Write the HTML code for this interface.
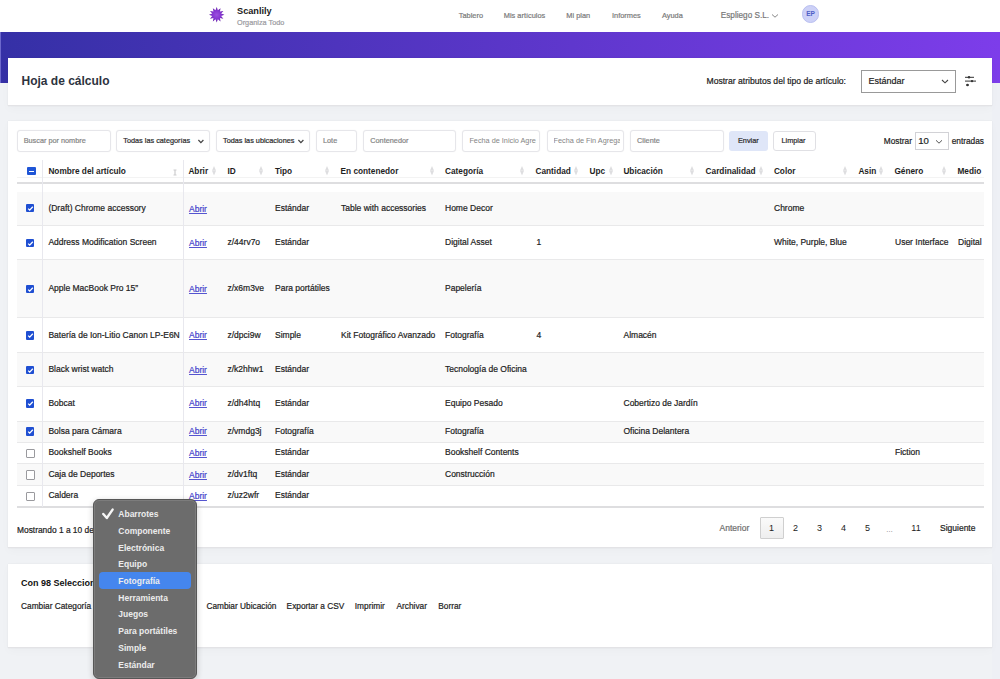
<!DOCTYPE html>
<html><head><meta charset="utf-8"><style>
html,body{margin:0;padding:0;}
body{width:1000px;height:679px;overflow:hidden;position:relative;background:#f0f2f5;font-family:"Liberation Sans", sans-serif;}
</style></head><body>
<div style="position:absolute;left:0px;top:0px;width:1000px;height:32px;background:#fff"></div>
<div style="position:absolute;left:0px;top:32px;width:1000px;height:50.5px;background:linear-gradient(90deg,#3530a6 0%,#5a36c8 50%,#7d3dea 100%)"></div>
<div style="position:absolute;left:0px;top:32px;width:1px;height:50.5px;background:#6d68cc"></div>
<div style="position:absolute;left:992px;top:82.5px;width:8px;height:600px;background:#eef0f5"></div>
<svg style="position:absolute;left:0;top:0" width="1000" height="40"><defs><radialGradient id="sg" cx="50%" cy="50%" r="50%"><stop offset="0%" stop-color="#9c4fe0"/><stop offset="60%" stop-color="#8334d0"/><stop offset="100%" stop-color="#5f1a9e"/></radialGradient></defs><polygon points="216.70,7.10 217.89,10.36 220.55,8.13 219.95,11.55 223.37,10.95 221.14,13.61 224.40,14.80 221.14,15.99 223.37,18.65 219.95,18.05 220.55,21.47 217.89,19.24 216.70,22.50 215.51,19.24 212.85,21.47 213.45,18.05 210.03,18.65 212.26,15.99 209.00,14.80 212.26,13.61 210.03,10.95 213.45,11.55 212.85,8.13 215.51,10.36" fill="url(#sg)"/></svg>
<div style="position:absolute;left:237px;top:0.85px;line-height:20px;font-size:9.2px;font-weight:700;color:#1b1b1b;white-space:nowrap;">Scanlily</div>
<div style="position:absolute;left:237px;top:12.88px;line-height:20px;font-size:7.3px;font-weight:400;color:#9a9aa0;white-space:nowrap;-webkit-text-stroke:0.2px #9a9aa0;">Organiza Todo</div>
<div style="position:absolute;left:458.8px;top:5.88px;line-height:20px;font-size:7.4px;font-weight:400;color:#7a7a7a;white-space:nowrap;-webkit-text-stroke:0.2px #7a7a7a;">Tablero</div>
<div style="position:absolute;left:503.8px;top:5.88px;line-height:20px;font-size:7.4px;font-weight:400;color:#7a7a7a;white-space:nowrap;-webkit-text-stroke:0.2px #7a7a7a;">Mis artículos</div>
<div style="position:absolute;left:566.3px;top:5.88px;line-height:20px;font-size:7.4px;font-weight:400;color:#7a7a7a;white-space:nowrap;-webkit-text-stroke:0.2px #7a7a7a;">Mi plan</div>
<div style="position:absolute;left:612px;top:5.88px;line-height:20px;font-size:7.4px;font-weight:400;color:#7a7a7a;white-space:nowrap;-webkit-text-stroke:0.2px #7a7a7a;">Informes</div>
<div style="position:absolute;left:662px;top:5.88px;line-height:20px;font-size:7.4px;font-weight:400;color:#7a7a7a;white-space:nowrap;-webkit-text-stroke:0.2px #7a7a7a;">Ayuda</div>
<div style="position:absolute;left:720.8px;top:5.86px;line-height:20px;font-size:8.2px;font-weight:400;color:#777;white-space:nowrap;-webkit-text-stroke:0.2px #777;">Espliego S.L.</div>
<svg style="position:absolute;left:771px;top:13px" width="8" height="6"><path d="M1 1.5 L4 4.2 L7 1.5" stroke="#888" stroke-width="1" fill="none"/></svg>
<div style="position:absolute;left:802px;top:5.4px;width:15.4px;height:15.4px;border-radius:50%;background:#cdd1f7;border:1px solid #b9bff0"></div>
<div style="position:absolute;left:806.2px;top:4.29px;line-height:20px;font-size:6.6px;font-weight:700;color:#4f5fc6;white-space:nowrap;">EP</div>
<div style="position:absolute;left:8px;top:57.5px;width:984px;height:47px;background:#fff;border-bottom:1px solid #e3e3e6;box-shadow:0 0 1px rgba(0,0,0,0.1),0 3px 9px rgba(0,0,0,0.025)"></div>
<div style="position:absolute;left:21.5px;top:71.40px;line-height:20px;font-size:12px;font-weight:700;color:#2d3340;white-space:nowrap;">Hoja de cálculo</div>
<div style="position:absolute;left:706.5px;top:70.86px;line-height:20px;font-size:8.6px;font-weight:400;color:#222;white-space:nowrap;-webkit-text-stroke:0.2px #222;">Mostrar atributos del tipo de artículo:</div>
<div style="position:absolute;left:861px;top:70px;width:93px;height:20.5px;background:#fff;border:1px solid #999"></div>
<div style="position:absolute;left:868.5px;top:70.65px;line-height:20px;font-size:9px;font-weight:400;color:#222;white-space:nowrap;-webkit-text-stroke:0.2px #222;">Estándar</div>
<svg style="position:absolute;left:941px;top:78.5px" width="8" height="5"><path d="M1 1 L4 3.8 L7 1" stroke="#444" stroke-width="1.1" fill="none"/></svg>
<svg style="position:absolute;left:962px;top:73px" width="16" height="16"><line x1="3" y1="4.3" x2="12" y2="4.3" stroke="#333" stroke-width="1"/><circle cx="7" cy="4.3" r="1.2" fill="#333"/><line x1="3" y1="8.1" x2="14" y2="8.1" stroke="#333" stroke-width="1"/><circle cx="10" cy="8.1" r="1.2" fill="#333"/><line x1="4" y1="12" x2="7" y2="12" stroke="#333" stroke-width="1"/><circle cx="5.5" cy="12" r="1.2" fill="#333"/></svg>
<div style="position:absolute;left:8px;top:121px;width:984px;height:425.8px;background:#fff;border-bottom:1px solid #e3e3e6;box-shadow:0 0 1px rgba(0,0,0,0.1),0 3px 9px rgba(0,0,0,0.025)"></div>
<div style="position:absolute;left:16.7px;top:130px;width:92.3px;height:19.5px;background:#fff;border:1px solid #e6e6ea;border-radius:3px;box-shadow:0 0 1.5px rgba(0,0,0,0.06)"></div>
<div style="position:absolute;left:23.7px;top:130.88px;line-height:20px;font-size:7.3px;font-weight:400;color:#858585;white-space:nowrap;-webkit-text-stroke:0.2px #858585;">Buscar por nombre</div>
<div style="position:absolute;left:116.3px;top:130px;width:92.10000000000001px;height:19.5px;background:#fff;border:1px solid #e6e6ea;border-radius:3px;box-shadow:0 0 1.5px rgba(0,0,0,0.06)"></div>
<div style="position:absolute;left:123.3px;top:130.88px;line-height:20px;font-size:7.3px;font-weight:400;color:#2a2a2a;white-space:nowrap;-webkit-text-stroke:0.2px #2a2a2a;">Todas las categorías</div>
<svg style="position:absolute;left:197.4px;top:139px" width="8" height="6"><path d="M1.4 1 L3.9 3.6 L6.4 1" stroke="#444" stroke-width="1.2" fill="none"/></svg>
<div style="position:absolute;left:216px;top:130px;width:91.60000000000002px;height:19.5px;background:#fff;border:1px solid #e6e6ea;border-radius:3px;box-shadow:0 0 1.5px rgba(0,0,0,0.06)"></div>
<div style="position:absolute;left:223px;top:130.88px;line-height:20px;font-size:7.3px;font-weight:400;color:#2a2a2a;white-space:nowrap;-webkit-text-stroke:0.2px #2a2a2a;">Todas las ubicaciones</div>
<svg style="position:absolute;left:296.6px;top:139px" width="8" height="6"><path d="M1.4 1 L3.9 3.6 L6.4 1" stroke="#444" stroke-width="1.2" fill="none"/></svg>
<div style="position:absolute;left:316px;top:130px;width:38.80000000000001px;height:19.5px;background:#fff;border:1px solid #e6e6ea;border-radius:3px;box-shadow:0 0 1.5px rgba(0,0,0,0.06)"></div>
<div style="position:absolute;left:323px;top:130.88px;line-height:20px;font-size:7.3px;font-weight:400;color:#858585;white-space:nowrap;-webkit-text-stroke:0.2px #858585;">Lote</div>
<div style="position:absolute;left:363.3px;top:130px;width:91.09999999999997px;height:19.5px;background:#fff;border:1px solid #e6e6ea;border-radius:3px;box-shadow:0 0 1.5px rgba(0,0,0,0.06)"></div>
<div style="position:absolute;left:370.3px;top:130.88px;line-height:20px;font-size:7.3px;font-weight:400;color:#858585;white-space:nowrap;-webkit-text-stroke:0.2px #858585;">Contenedor</div>
<div style="position:absolute;left:462.4px;top:130px;width:76px;height:19.5px;border:1px solid #e6e6ea;border-radius:3px;box-shadow:0 0 1.5px rgba(0,0,0,0.06);background:#fff"><div style="position:absolute;left:6px;top:0;width:66.5px;height:19.5px;overflow:hidden"><div style="position:absolute;left:0;top:0;line-height:20px;font-size:7.3px;color:#858585;white-space:nowrap;font-family:&quot;Liberation Sans&quot;, sans-serif">Fecha de Inicio Agregado</div></div></div>
<div style="position:absolute;left:546.6px;top:130px;width:75.7px;height:19.5px;border:1px solid #e6e6ea;border-radius:3px;box-shadow:0 0 1.5px rgba(0,0,0,0.06);background:#fff"><div style="position:absolute;left:6px;top:0;width:66px;height:19.5px;overflow:hidden"><div style="position:absolute;left:0;top:0;line-height:20px;font-size:7.3px;color:#858585;white-space:nowrap;font-family:&quot;Liberation Sans&quot;, sans-serif">Fecha de Fin Agregado</div></div></div>
<div style="position:absolute;left:630.1px;top:130px;width:92.0px;height:19.5px;background:#fff;border:1px solid #e6e6ea;border-radius:3px;box-shadow:0 0 1.5px rgba(0,0,0,0.06)"></div>
<div style="position:absolute;left:637.1px;top:130.88px;line-height:20px;font-size:7.3px;font-weight:400;color:#858585;white-space:nowrap;-webkit-text-stroke:0.2px #858585;">Cliente</div>
<div style="position:absolute;left:729.3px;top:130.8px;width:38.6px;height:20.3px;background:#dfe6f8;border-radius:3px"></div>
<div style="position:absolute;left:738px;top:130.88px;line-height:20px;font-size:7.3px;font-weight:400;color:#2a2a2a;white-space:nowrap;-webkit-text-stroke:0.2px #2a2a2a;">Enviar</div>
<div style="position:absolute;left:773.4px;top:130.8px;width:40.3px;height:18.5px;background:#fff;border:1px solid #e0e0e4;border-radius:3px"></div>
<div style="position:absolute;left:781.5px;top:130.88px;line-height:20px;font-size:7.3px;font-weight:400;color:#2a2a2a;white-space:nowrap;-webkit-text-stroke:0.2px #2a2a2a;">Limpiar</div>
<div style="position:absolute;left:883.8px;top:130.86px;line-height:20px;font-size:8.3px;font-weight:400;color:#222;white-space:nowrap;-webkit-text-stroke:0.2px #222;">Mostrar</div>
<div style="position:absolute;left:915.3px;top:132.3px;width:31.5px;height:15.5px;background:#fff;border:1px solid #d2d2d6"></div>
<div style="position:absolute;left:918.2px;top:130.84px;line-height:20px;font-size:9.6px;font-weight:400;color:#222;white-space:nowrap;-webkit-text-stroke:0.2px #222;">10</div>
<svg style="position:absolute;left:935px;top:138.5px" width="8" height="6"><path d="M1 1.3 L4 4.2 L7 1.3" stroke="#555" stroke-width="1" fill="none"/></svg>
<div style="position:absolute;left:951.7px;top:130.86px;line-height:20px;font-size:8.3px;font-weight:400;color:#222;white-space:nowrap;-webkit-text-stroke:0.2px #222;">entradas</div>
<div style="position:absolute;left:16.5px;top:155px;width:967px;height:360px;overflow:hidden">
<div style="position:absolute;left:0.0px;top:27px;width:967px;height:2px;background:#dedee0"></div>
<div style="position:absolute;left:0.0px;top:22px;width:967px;height:1px;background:#f3f3f3"></div>
<div style="position:absolute;left:31.9px;top:6.96px;line-height:20px;font-size:8.25px;font-weight:700;color:#1e1e1e;white-space:nowrap;">Nombre del artículo</div>
<svg style="position:absolute;left:156.0px;top:13.5px" width="4" height="7"><path d="M0.5 0.5 H3.5 V1.5 H2.6 V5.5 H3.5 V6.5 H0.5 V5.5 H1.4 V1.5 H0.5 Z" fill="#cdcdcf"/></svg>
<div style="position:absolute;left:171.9px;top:6.96px;line-height:20px;font-size:8.25px;font-weight:700;color:#1e1e1e;white-space:nowrap;">Abrir</div>
<svg style="position:absolute;left:195.7px;top:10.800000000000011px" width="4" height="10"><path d="M2 0 L4 4.6 L0 4.6 Z M2 9.4 L4 4.8 L0 4.8 Z" fill="#dedee0"/></svg>
<div style="position:absolute;left:211.0px;top:6.96px;line-height:20px;font-size:8.25px;font-weight:700;color:#1e1e1e;white-space:nowrap;">ID</div>
<svg style="position:absolute;left:242.89999999999998px;top:10.800000000000011px" width="4" height="10"><path d="M2 0 L4 4.6 L0 4.6 Z M2 9.4 L4 4.8 L0 4.8 Z" fill="#dedee0"/></svg>
<div style="position:absolute;left:258.4px;top:6.96px;line-height:20px;font-size:8.25px;font-weight:700;color:#1e1e1e;white-space:nowrap;">Tipo</div>
<svg style="position:absolute;left:308.0px;top:10.800000000000011px" width="4" height="10"><path d="M2 0 L4 4.6 L0 4.6 Z M2 9.4 L4 4.8 L0 4.8 Z" fill="#dedee0"/></svg>
<div style="position:absolute;left:324.1px;top:6.96px;line-height:20px;font-size:8.25px;font-weight:700;color:#1e1e1e;white-space:nowrap;">En contenedor</div>
<svg style="position:absolute;left:413.0px;top:10.800000000000011px" width="4" height="10"><path d="M2 0 L4 4.6 L0 4.6 Z M2 9.4 L4 4.8 L0 4.8 Z" fill="#dedee0"/></svg>
<div style="position:absolute;left:428.5px;top:6.96px;line-height:20px;font-size:8.25px;font-weight:700;color:#1e1e1e;white-space:nowrap;">Categoría</div>
<svg style="position:absolute;left:503.5px;top:10.800000000000011px" width="4" height="10"><path d="M2 0 L4 4.6 L0 4.6 Z M2 9.4 L4 4.8 L0 4.8 Z" fill="#dedee0"/></svg>
<div style="position:absolute;left:519.0px;top:6.96px;line-height:20px;font-size:8.25px;font-weight:700;color:#1e1e1e;white-space:nowrap;">Cantidad</div>
<svg style="position:absolute;left:557.5px;top:10.800000000000011px" width="4" height="10"><path d="M2 0 L4 4.6 L0 4.6 Z M2 9.4 L4 4.8 L0 4.8 Z" fill="#dedee0"/></svg>
<div style="position:absolute;left:573.0px;top:6.96px;line-height:20px;font-size:8.25px;font-weight:700;color:#1e1e1e;white-space:nowrap;">Upc</div>
<svg style="position:absolute;left:592.0px;top:10.800000000000011px" width="4" height="10"><path d="M2 0 L4 4.6 L0 4.6 Z M2 9.4 L4 4.8 L0 4.8 Z" fill="#dedee0"/></svg>
<div style="position:absolute;left:606.9px;top:6.96px;line-height:20px;font-size:8.25px;font-weight:700;color:#1e1e1e;white-space:nowrap;">Ubicación</div>
<svg style="position:absolute;left:673.5px;top:10.800000000000011px" width="4" height="10"><path d="M2 0 L4 4.6 L0 4.6 Z M2 9.4 L4 4.8 L0 4.8 Z" fill="#dedee0"/></svg>
<div style="position:absolute;left:689.1px;top:6.96px;line-height:20px;font-size:8.25px;font-weight:700;color:#1e1e1e;white-space:nowrap;">Cardinalidad</div>
<svg style="position:absolute;left:742.0px;top:10.800000000000011px" width="4" height="10"><path d="M2 0 L4 4.6 L0 4.6 Z M2 9.4 L4 4.8 L0 4.8 Z" fill="#dedee0"/></svg>
<div style="position:absolute;left:757.4px;top:6.96px;line-height:20px;font-size:8.25px;font-weight:700;color:#1e1e1e;white-space:nowrap;">Color</div>
<svg style="position:absolute;left:826.0px;top:10.800000000000011px" width="4" height="10"><path d="M2 0 L4 4.6 L0 4.6 Z M2 9.4 L4 4.8 L0 4.8 Z" fill="#dedee0"/></svg>
<div style="position:absolute;left:841.9px;top:6.96px;line-height:20px;font-size:8.25px;font-weight:700;color:#1e1e1e;white-space:nowrap;">Asin</div>
<svg style="position:absolute;left:862.2px;top:10.800000000000011px" width="4" height="10"><path d="M2 0 L4 4.6 L0 4.6 Z M2 9.4 L4 4.8 L0 4.8 Z" fill="#dedee0"/></svg>
<div style="position:absolute;left:877.9px;top:6.96px;line-height:20px;font-size:8.25px;font-weight:700;color:#1e1e1e;white-space:nowrap;">Género</div>
<svg style="position:absolute;left:925.8px;top:10.800000000000011px" width="4" height="10"><path d="M2 0 L4 4.6 L0 4.6 Z M2 9.4 L4 4.8 L0 4.8 Z" fill="#dedee0"/></svg>
<div style="position:absolute;left:941.0px;top:6.96px;line-height:20px;font-size:8.25px;font-weight:700;color:#1e1e1e;white-space:nowrap;">Medio</div>
<div style="position:absolute;left:10.7px;top:12px;width:8.4px;height:8.4px;background:#1f55d6;border-radius:1px"></div>
<div style="position:absolute;left:12.2px;top:15.699999999999989px;width:5.4px;height:1.2px;background:#fff"></div>
<div style="position:absolute;left:0.0px;top:37px;width:967px;height:33px;background:#f9f9f9"></div>
<div style="position:absolute;left:0.0px;top:70px;width:967px;height:1px;background:#e9e9ea"></div>
<div style="position:absolute;left:9.100000000000001px;top:48.5px;width:8.5px;height:8.5px;background:#1f4fd2;border-radius:1px"></div>
<svg style="position:absolute;left:9.100000000000001px;top:48.5px" width="9" height="9"><path d="M2.2 4.6 L3.7 6.1 L6.8 2.8" stroke="#fff" stroke-width="1.3" fill="none"/></svg>
<div style="position:absolute;left:31.9px;top:43.36px;line-height:20px;font-size:8.5px;font-weight:400;color:#222;white-space:nowrap;-webkit-text-stroke:0.2px #222;">(Draft) Chrome accessory</div>
<div style="position:absolute;left:258.5px;top:43.36px;line-height:20px;font-size:8.5px;font-weight:400;color:#222;white-space:nowrap;-webkit-text-stroke:0.2px #222;">Estándar</div>
<div style="position:absolute;left:324.5px;top:43.36px;line-height:20px;font-size:8.5px;font-weight:400;color:#222;white-space:nowrap;-webkit-text-stroke:0.2px #222;">Table with accessories</div>
<div style="position:absolute;left:428.5px;top:43.36px;line-height:20px;font-size:8.5px;font-weight:400;color:#222;white-space:nowrap;-webkit-text-stroke:0.2px #222;">Home Decor</div>
<div style="position:absolute;left:757.5px;top:43.36px;line-height:20px;font-size:8.5px;font-weight:400;color:#222;white-space:nowrap;-webkit-text-stroke:0.2px #222;">Chrome</div>
<div style="position:absolute;left:172.5px;top:43.76px;line-height:20px;font-size:8.5px;font-weight:400;color:#4343cc;white-space:nowrap;-webkit-text-stroke:0.2px #4343cc;text-decoration:underline;text-underline-offset:0.6px;text-decoration-color:#5555d0">Abrir</div>
<div style="position:absolute;left:0.0px;top:71px;width:967px;height:33px;background:#fff"></div>
<div style="position:absolute;left:0.0px;top:104px;width:967px;height:1px;background:#e9e9ea"></div>
<div style="position:absolute;left:9.100000000000001px;top:83.5px;width:8.5px;height:8.5px;background:#1f4fd2;border-radius:1px"></div>
<svg style="position:absolute;left:9.100000000000001px;top:83.5px" width="9" height="9"><path d="M2.2 4.6 L3.7 6.1 L6.8 2.8" stroke="#fff" stroke-width="1.3" fill="none"/></svg>
<div style="position:absolute;left:31.9px;top:77.36px;line-height:20px;font-size:8.5px;font-weight:400;color:#222;white-space:nowrap;-webkit-text-stroke:0.2px #222;">Address Modification Screen</div>
<div style="position:absolute;left:211.0px;top:77.36px;line-height:20px;font-size:8.5px;font-weight:400;color:#222;white-space:nowrap;-webkit-text-stroke:0.2px #222;">z/44rv7o</div>
<div style="position:absolute;left:258.5px;top:77.36px;line-height:20px;font-size:8.5px;font-weight:400;color:#222;white-space:nowrap;-webkit-text-stroke:0.2px #222;">Estándar</div>
<div style="position:absolute;left:428.5px;top:77.36px;line-height:20px;font-size:8.5px;font-weight:400;color:#222;white-space:nowrap;-webkit-text-stroke:0.2px #222;">Digital Asset</div>
<div style="position:absolute;left:520.0px;top:77.36px;line-height:20px;font-size:8.5px;font-weight:400;color:#222;white-space:nowrap;-webkit-text-stroke:0.2px #222;">1</div>
<div style="position:absolute;left:757.5px;top:77.36px;line-height:20px;font-size:8.5px;font-weight:400;color:#222;white-space:nowrap;-webkit-text-stroke:0.2px #222;">White, Purple, Blue</div>
<div style="position:absolute;left:878.5px;top:77.36px;line-height:20px;font-size:8.5px;font-weight:400;color:#222;white-space:nowrap;-webkit-text-stroke:0.2px #222;">User Interface</div>
<div style="position:absolute;left:941.5px;top:77.36px;line-height:20px;font-size:8.5px;font-weight:400;color:#222;white-space:nowrap;-webkit-text-stroke:0.2px #222;">Digital</div>
<div style="position:absolute;left:172.5px;top:77.76px;line-height:20px;font-size:8.5px;font-weight:400;color:#4343cc;white-space:nowrap;-webkit-text-stroke:0.2px #4343cc;text-decoration:underline;text-underline-offset:0.6px;text-decoration-color:#5555d0">Abrir</div>
<div style="position:absolute;left:0.0px;top:105px;width:967px;height:57px;background:#f9f9f9"></div>
<div style="position:absolute;left:0.0px;top:162px;width:967px;height:1px;background:#e9e9ea"></div>
<div style="position:absolute;left:9.100000000000001px;top:129.5px;width:8.5px;height:8.5px;background:#1f4fd2;border-radius:1px"></div>
<svg style="position:absolute;left:9.100000000000001px;top:129.5px" width="9" height="9"><path d="M2.2 4.6 L3.7 6.1 L6.8 2.8" stroke="#fff" stroke-width="1.3" fill="none"/></svg>
<div style="position:absolute;left:31.9px;top:123.36px;line-height:20px;font-size:8.5px;font-weight:400;color:#222;white-space:nowrap;-webkit-text-stroke:0.2px #222;">Apple MacBook Pro 15”</div>
<div style="position:absolute;left:211.0px;top:123.36px;line-height:20px;font-size:8.5px;font-weight:400;color:#222;white-space:nowrap;-webkit-text-stroke:0.2px #222;">z/x6m3ve</div>
<div style="position:absolute;left:258.5px;top:123.36px;line-height:20px;font-size:8.5px;font-weight:400;color:#222;white-space:nowrap;-webkit-text-stroke:0.2px #222;">Para portátiles</div>
<div style="position:absolute;left:428.5px;top:123.36px;line-height:20px;font-size:8.5px;font-weight:400;color:#222;white-space:nowrap;-webkit-text-stroke:0.2px #222;">Papelería</div>
<div style="position:absolute;left:172.5px;top:123.76px;line-height:20px;font-size:8.5px;font-weight:400;color:#4343cc;white-space:nowrap;-webkit-text-stroke:0.2px #4343cc;text-decoration:underline;text-underline-offset:0.6px;text-decoration-color:#5555d0">Abrir</div>
<div style="position:absolute;left:0.0px;top:163px;width:967px;height:34px;background:#fff"></div>
<div style="position:absolute;left:0.0px;top:197px;width:967px;height:1px;background:#e9e9ea"></div>
<div style="position:absolute;left:9.100000000000001px;top:176.0px;width:8.5px;height:8.5px;background:#1f4fd2;border-radius:1px"></div>
<svg style="position:absolute;left:9.100000000000001px;top:176.0px" width="9" height="9"><path d="M2.2 4.6 L3.7 6.1 L6.8 2.8" stroke="#fff" stroke-width="1.3" fill="none"/></svg>
<div style="position:absolute;left:31.9px;top:169.86px;line-height:20px;font-size:8.5px;font-weight:400;color:#222;white-space:nowrap;-webkit-text-stroke:0.2px #222;">Batería de Ion-Litio Canon LP-E6N</div>
<div style="position:absolute;left:211.0px;top:169.86px;line-height:20px;font-size:8.5px;font-weight:400;color:#222;white-space:nowrap;-webkit-text-stroke:0.2px #222;">z/dpci9w</div>
<div style="position:absolute;left:258.5px;top:169.86px;line-height:20px;font-size:8.5px;font-weight:400;color:#222;white-space:nowrap;-webkit-text-stroke:0.2px #222;">Simple</div>
<div style="position:absolute;left:324.5px;top:169.86px;line-height:20px;font-size:8.5px;font-weight:400;color:#222;white-space:nowrap;-webkit-text-stroke:0.2px #222;">Kit Fotográfico Avanzado</div>
<div style="position:absolute;left:428.5px;top:169.86px;line-height:20px;font-size:8.5px;font-weight:400;color:#222;white-space:nowrap;-webkit-text-stroke:0.2px #222;">Fotografía</div>
<div style="position:absolute;left:520.0px;top:169.86px;line-height:20px;font-size:8.5px;font-weight:400;color:#222;white-space:nowrap;-webkit-text-stroke:0.2px #222;">4</div>
<div style="position:absolute;left:607.0px;top:169.86px;line-height:20px;font-size:8.5px;font-weight:400;color:#222;white-space:nowrap;-webkit-text-stroke:0.2px #222;">Almacén</div>
<div style="position:absolute;left:172.5px;top:170.26px;line-height:20px;font-size:8.5px;font-weight:400;color:#4343cc;white-space:nowrap;-webkit-text-stroke:0.2px #4343cc;text-decoration:underline;text-underline-offset:0.6px;text-decoration-color:#5555d0">Abrir</div>
<div style="position:absolute;left:0.0px;top:198px;width:967px;height:33px;background:#f9f9f9"></div>
<div style="position:absolute;left:0.0px;top:231px;width:967px;height:1px;background:#e9e9ea"></div>
<div style="position:absolute;left:9.100000000000001px;top:210.5px;width:8.5px;height:8.5px;background:#1f4fd2;border-radius:1px"></div>
<svg style="position:absolute;left:9.100000000000001px;top:210.5px" width="9" height="9"><path d="M2.2 4.6 L3.7 6.1 L6.8 2.8" stroke="#fff" stroke-width="1.3" fill="none"/></svg>
<div style="position:absolute;left:31.9px;top:204.36px;line-height:20px;font-size:8.5px;font-weight:400;color:#222;white-space:nowrap;-webkit-text-stroke:0.2px #222;">Black wrist watch</div>
<div style="position:absolute;left:211.0px;top:204.36px;line-height:20px;font-size:8.5px;font-weight:400;color:#222;white-space:nowrap;-webkit-text-stroke:0.2px #222;">z/k2hhw1</div>
<div style="position:absolute;left:258.5px;top:204.36px;line-height:20px;font-size:8.5px;font-weight:400;color:#222;white-space:nowrap;-webkit-text-stroke:0.2px #222;">Estándar</div>
<div style="position:absolute;left:428.5px;top:204.36px;line-height:20px;font-size:8.5px;font-weight:400;color:#222;white-space:nowrap;-webkit-text-stroke:0.2px #222;">Tecnología de Oficina</div>
<div style="position:absolute;left:172.5px;top:204.76px;line-height:20px;font-size:8.5px;font-weight:400;color:#4343cc;white-space:nowrap;-webkit-text-stroke:0.2px #4343cc;text-decoration:underline;text-underline-offset:0.6px;text-decoration-color:#5555d0">Abrir</div>
<div style="position:absolute;left:0.0px;top:232px;width:967px;height:34px;background:#fff"></div>
<div style="position:absolute;left:0.0px;top:266px;width:967px;height:1px;background:#e9e9ea"></div>
<div style="position:absolute;left:9.100000000000001px;top:244.0px;width:8.5px;height:8.5px;background:#1f4fd2;border-radius:1px"></div>
<svg style="position:absolute;left:9.100000000000001px;top:244.0px" width="9" height="9"><path d="M2.2 4.6 L3.7 6.1 L6.8 2.8" stroke="#fff" stroke-width="1.3" fill="none"/></svg>
<div style="position:absolute;left:31.9px;top:237.86px;line-height:20px;font-size:8.5px;font-weight:400;color:#222;white-space:nowrap;-webkit-text-stroke:0.2px #222;">Bobcat</div>
<div style="position:absolute;left:211.0px;top:237.86px;line-height:20px;font-size:8.5px;font-weight:400;color:#222;white-space:nowrap;-webkit-text-stroke:0.2px #222;">z/dh4htq</div>
<div style="position:absolute;left:258.5px;top:237.86px;line-height:20px;font-size:8.5px;font-weight:400;color:#222;white-space:nowrap;-webkit-text-stroke:0.2px #222;">Estándar</div>
<div style="position:absolute;left:428.5px;top:237.86px;line-height:20px;font-size:8.5px;font-weight:400;color:#222;white-space:nowrap;-webkit-text-stroke:0.2px #222;">Equipo Pesado</div>
<div style="position:absolute;left:607.0px;top:237.86px;line-height:20px;font-size:8.5px;font-weight:400;color:#222;white-space:nowrap;-webkit-text-stroke:0.2px #222;">Cobertizo de Jardín</div>
<div style="position:absolute;left:172.5px;top:238.26px;line-height:20px;font-size:8.5px;font-weight:400;color:#4343cc;white-space:nowrap;-webkit-text-stroke:0.2px #4343cc;text-decoration:underline;text-underline-offset:0.6px;text-decoration-color:#5555d0">Abrir</div>
<div style="position:absolute;left:0.0px;top:267px;width:967px;height:20px;background:#f9f9f9"></div>
<div style="position:absolute;left:0.0px;top:287px;width:967px;height:1px;background:#e9e9ea"></div>
<div style="position:absolute;left:9.100000000000001px;top:272.0px;width:8.5px;height:8.5px;background:#1f4fd2;border-radius:1px"></div>
<svg style="position:absolute;left:9.100000000000001px;top:272.0px" width="9" height="9"><path d="M2.2 4.6 L3.7 6.1 L6.8 2.8" stroke="#fff" stroke-width="1.3" fill="none"/></svg>
<div style="position:absolute;left:31.9px;top:265.86px;line-height:20px;font-size:8.5px;font-weight:400;color:#222;white-space:nowrap;-webkit-text-stroke:0.2px #222;">Bolsa para Cámara</div>
<div style="position:absolute;left:211.0px;top:265.86px;line-height:20px;font-size:8.5px;font-weight:400;color:#222;white-space:nowrap;-webkit-text-stroke:0.2px #222;">z/vmdg3j</div>
<div style="position:absolute;left:258.5px;top:265.86px;line-height:20px;font-size:8.5px;font-weight:400;color:#222;white-space:nowrap;-webkit-text-stroke:0.2px #222;">Fotografía</div>
<div style="position:absolute;left:428.5px;top:265.86px;line-height:20px;font-size:8.5px;font-weight:400;color:#222;white-space:nowrap;-webkit-text-stroke:0.2px #222;">Fotografía</div>
<div style="position:absolute;left:607.0px;top:265.86px;line-height:20px;font-size:8.5px;font-weight:400;color:#222;white-space:nowrap;-webkit-text-stroke:0.2px #222;">Oficina Delantera</div>
<div style="position:absolute;left:172.5px;top:266.26px;line-height:20px;font-size:8.5px;font-weight:400;color:#4343cc;white-space:nowrap;-webkit-text-stroke:0.2px #4343cc;text-decoration:underline;text-underline-offset:0.6px;text-decoration-color:#5555d0">Abrir</div>
<div style="position:absolute;left:0.0px;top:288px;width:967px;height:20px;background:#fff"></div>
<div style="position:absolute;left:0.0px;top:308px;width:967px;height:1px;background:#e9e9ea"></div>
<div style="position:absolute;left:9.0px;top:293.90000000000003px;width:7.2px;height:7.2px;background:#fff;border:1px solid #9a9a9e;border-radius:1px"></div>
<div style="position:absolute;left:31.9px;top:287.26px;line-height:20px;font-size:8.5px;font-weight:400;color:#222;white-space:nowrap;-webkit-text-stroke:0.2px #222;">Bookshelf Books</div>
<div style="position:absolute;left:258.5px;top:287.26px;line-height:20px;font-size:8.5px;font-weight:400;color:#222;white-space:nowrap;-webkit-text-stroke:0.2px #222;">Estándar</div>
<div style="position:absolute;left:428.5px;top:287.26px;line-height:20px;font-size:8.5px;font-weight:400;color:#222;white-space:nowrap;-webkit-text-stroke:0.2px #222;">Bookshelf Contents</div>
<div style="position:absolute;left:878.5px;top:287.26px;line-height:20px;font-size:8.5px;font-weight:400;color:#222;white-space:nowrap;-webkit-text-stroke:0.2px #222;">Fiction</div>
<div style="position:absolute;left:172.5px;top:287.66px;line-height:20px;font-size:8.5px;font-weight:400;color:#4343cc;white-space:nowrap;-webkit-text-stroke:0.2px #4343cc;text-decoration:underline;text-underline-offset:0.6px;text-decoration-color:#5555d0">Abrir</div>
<div style="position:absolute;left:0.0px;top:309px;width:967px;height:21px;background:#f9f9f9"></div>
<div style="position:absolute;left:0.0px;top:330px;width:967px;height:1px;background:#e9e9ea"></div>
<div style="position:absolute;left:9.0px;top:315.40000000000003px;width:7.2px;height:7.2px;background:#fff;border:1px solid #9a9a9e;border-radius:1px"></div>
<div style="position:absolute;left:31.9px;top:309.36px;line-height:20px;font-size:8.5px;font-weight:400;color:#222;white-space:nowrap;-webkit-text-stroke:0.2px #222;">Caja de Deportes</div>
<div style="position:absolute;left:211.0px;top:309.36px;line-height:20px;font-size:8.5px;font-weight:400;color:#222;white-space:nowrap;-webkit-text-stroke:0.2px #222;">z/dv1ftq</div>
<div style="position:absolute;left:258.5px;top:309.36px;line-height:20px;font-size:8.5px;font-weight:400;color:#222;white-space:nowrap;-webkit-text-stroke:0.2px #222;">Estándar</div>
<div style="position:absolute;left:428.5px;top:309.36px;line-height:20px;font-size:8.5px;font-weight:400;color:#222;white-space:nowrap;-webkit-text-stroke:0.2px #222;">Construcción</div>
<div style="position:absolute;left:172.5px;top:309.76px;line-height:20px;font-size:8.5px;font-weight:400;color:#4343cc;white-space:nowrap;-webkit-text-stroke:0.2px #4343cc;text-decoration:underline;text-underline-offset:0.6px;text-decoration-color:#5555d0">Abrir</div>
<div style="position:absolute;left:0.0px;top:331px;width:967px;height:20px;background:#fff"></div>
<div style="position:absolute;left:0.0px;top:351px;width:967px;height:2px;background:#dedee0"></div>
<div style="position:absolute;left:9.0px;top:336.90000000000003px;width:7.2px;height:7.2px;background:#fff;border:1px solid #9a9a9e;border-radius:1px"></div>
<div style="position:absolute;left:31.9px;top:330.26px;line-height:20px;font-size:8.5px;font-weight:400;color:#222;white-space:nowrap;-webkit-text-stroke:0.2px #222;">Caldera</div>
<div style="position:absolute;left:211.0px;top:330.26px;line-height:20px;font-size:8.5px;font-weight:400;color:#222;white-space:nowrap;-webkit-text-stroke:0.2px #222;">z/uz2wfr</div>
<div style="position:absolute;left:258.5px;top:330.26px;line-height:20px;font-size:8.5px;font-weight:400;color:#222;white-space:nowrap;-webkit-text-stroke:0.2px #222;">Estándar</div>
<div style="position:absolute;left:172.5px;top:330.66px;line-height:20px;font-size:8.5px;font-weight:400;color:#4343cc;white-space:nowrap;-webkit-text-stroke:0.2px #4343cc;text-decoration:underline;text-underline-offset:0.6px;text-decoration-color:#5555d0">Abrir</div>
<div style="position:absolute;left:25.700000000000003px;top:4.5px;width:1px;height:347.5px;background:#e8e8ee"></div>
<div style="position:absolute;left:166.1px;top:4.5px;width:1px;height:347.5px;background:#e8e8ee"></div>
</div>
<div style="position:absolute;left:17px;top:519.86px;line-height:20px;font-size:8.4px;font-weight:400;color:#222;white-space:nowrap;-webkit-text-stroke:0.2px #222;">Mostrando 1 a 10 de 98 entradas</div>
<div style="position:absolute;left:719.5px;top:517.86px;line-height:20px;font-size:8.5px;font-weight:400;color:#6e6e6e;white-space:nowrap;-webkit-text-stroke:0.2px #6e6e6e;">Anterior</div>
<div style="position:absolute;left:760px;top:517px;width:21.5px;height:20px;background:linear-gradient(#fafafa,#eeeeee);border:1px solid #cfcfcf;border-radius:1px"></div>
<div style="position:absolute;left:756.4px;top:518.0px;width:30px;text-align:center;line-height:20px;font-size:9px;color:#222">1</div>
<div style="position:absolute;left:780.4px;top:518.0px;width:30px;text-align:center;line-height:20px;font-size:9px;color:#222">2</div>
<div style="position:absolute;left:804.4px;top:518.0px;width:30px;text-align:center;line-height:20px;font-size:9px;color:#222">3</div>
<div style="position:absolute;left:828.4px;top:518.0px;width:30px;text-align:center;line-height:20px;font-size:9px;color:#222">4</div>
<div style="position:absolute;left:852.4px;top:518.0px;width:30px;text-align:center;line-height:20px;font-size:9px;color:#222">5</div>
<div style="position:absolute;left:901px;top:518.0px;width:30px;text-align:center;line-height:20px;font-size:9px;color:#222">11</div>
<div style="position:absolute;left:874.6px;top:519.8px;width:30px;text-align:center;line-height:20px;font-size:7px;color:#666">…</div>
<div style="position:absolute;left:940px;top:517.86px;line-height:20px;font-size:8.5px;font-weight:400;color:#222;white-space:nowrap;-webkit-text-stroke:0.2px #222;">Siguiente</div>
<div style="position:absolute;left:8px;top:564px;width:984px;height:82.7px;background:#fff;border-bottom:1px solid #e3e3e6;box-shadow:0 0 1px rgba(0,0,0,0.1),0 3px 9px rgba(0,0,0,0.025)"></div>
<div style="position:absolute;left:21px;top:572.85px;line-height:20px;font-size:9px;font-weight:700;color:#111;white-space:nowrap;">Con 98 Seleccionados</div>
<div style="position:absolute;left:21.1px;top:596.06px;line-height:20px;font-size:8.3px;font-weight:400;color:#222;white-space:nowrap;-webkit-text-stroke:0.2px #222;">Cambiar Categoría</div>
<div style="position:absolute;left:110px;top:596.06px;line-height:20px;font-size:8.3px;font-weight:400;color:#222;white-space:nowrap;-webkit-text-stroke:0.2px #222;">Cambiar Tipo</div>
<div style="position:absolute;left:206.4px;top:596.06px;line-height:20px;font-size:8.3px;font-weight:400;color:#222;white-space:nowrap;-webkit-text-stroke:0.2px #222;">Cambiar Ubicación</div>
<div style="position:absolute;left:286.6px;top:596.06px;line-height:20px;font-size:8.3px;font-weight:400;color:#222;white-space:nowrap;-webkit-text-stroke:0.2px #222;">Exportar a CSV</div>
<div style="position:absolute;left:354.8px;top:596.06px;line-height:20px;font-size:8.3px;font-weight:400;color:#222;white-space:nowrap;-webkit-text-stroke:0.2px #222;">Imprimir</div>
<div style="position:absolute;left:396.5px;top:596.06px;line-height:20px;font-size:8.3px;font-weight:400;color:#222;white-space:nowrap;-webkit-text-stroke:0.2px #222;">Archivar</div>
<div style="position:absolute;left:438.3px;top:596.06px;line-height:20px;font-size:8.3px;font-weight:400;color:#222;white-space:nowrap;-webkit-text-stroke:0.2px #222;">Borrar</div>
<div style="position:absolute;left:92.6px;top:499px;width:102.3px;height:177.5px;background:#6c6c6c;border:1px solid #575757;border-radius:6px;box-shadow:inset 0 0 0 1px #7c7c7c,0 2px 6px rgba(0,0,0,.2)"></div>
<div style="position:absolute;left:98.5px;top:572.2px;width:92.2px;height:17.1px;background:#4586ee;border-radius:4px"></div>
<div style="position:absolute;left:118.3px;top:504.26px;line-height:20px;font-size:8.5px;font-weight:700;color:#ececec;white-space:nowrap;">Abarrotes</div>
<div style="position:absolute;left:118.3px;top:520.96px;line-height:20px;font-size:8.5px;font-weight:700;color:#ececec;white-space:nowrap;">Componente</div>
<div style="position:absolute;left:118.3px;top:537.66px;line-height:20px;font-size:8.5px;font-weight:700;color:#ececec;white-space:nowrap;">Electrónica</div>
<div style="position:absolute;left:118.3px;top:554.36px;line-height:20px;font-size:8.5px;font-weight:700;color:#ececec;white-space:nowrap;">Equipo</div>
<div style="position:absolute;left:118.3px;top:571.06px;line-height:20px;font-size:8.5px;font-weight:700;color:#ececec;white-space:nowrap;">Fotografía</div>
<div style="position:absolute;left:118.3px;top:587.76px;line-height:20px;font-size:8.5px;font-weight:700;color:#ececec;white-space:nowrap;">Herramienta</div>
<div style="position:absolute;left:118.3px;top:604.46px;line-height:20px;font-size:8.5px;font-weight:700;color:#ececec;white-space:nowrap;">Juegos</div>
<div style="position:absolute;left:118.3px;top:621.16px;line-height:20px;font-size:8.5px;font-weight:700;color:#ececec;white-space:nowrap;">Para portátiles</div>
<div style="position:absolute;left:118.3px;top:637.86px;line-height:20px;font-size:8.5px;font-weight:700;color:#ececec;white-space:nowrap;">Simple</div>
<div style="position:absolute;left:118.3px;top:654.56px;line-height:20px;font-size:8.5px;font-weight:700;color:#ececec;white-space:nowrap;">Estándar</div>
<svg style="position:absolute;left:101px;top:507px" width="14" height="13"><path d="M2.3 7 L5.8 11 L11.6 2.6" stroke="#f6f6f6" stroke-width="2.4" fill="none" stroke-linecap="round" stroke-linejoin="round"/></svg>
</body></html>
